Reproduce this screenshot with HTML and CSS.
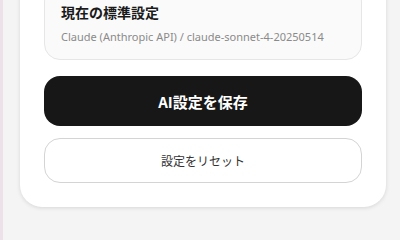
FILE: index.html
```html
<!DOCTYPE html>
<html>
<head>
    <title>AI設定</title>
    <link rel="stylesheet" href="styles.css">
</head>
<body>
    <div class="page">
        <div class="settings-card">
            <div class="current-box">
                <h3 class="current-title">現在の標準設定</h3>
                <p class="current-model">Claude (Anthropic API) / claude-sonnet-4-20250514</p>
            </div>
            <button class="btn btn-save">AI設定を保存</button>
            <button class="btn btn-reset">設定をリセット</button>
        </div>
    </div>
</body>
</html>
```

FILE: styles.css
```css
body {
    margin: 0;
    height: 240px;
    overflow: hidden;
    background-color: #f4f4f4;
    border-left: 3px solid #ece0e9;
    font-family: "Noto Sans", "Noto Sans CJK JP", sans-serif;
}
.page {
    padding: 0 14px 0 17px;
}
.settings-card {
    margin-top: -39px;
    background-color: #fff;
    border-radius: 22px;
    box-shadow: 0 1px 4px rgba(0, 0, 0, 0.12);
    padding: 24px;
    display: flex;
    flex-direction: column;
}
.current-box {
    background-color: #fafafa;
    border: 1px solid #e6e6e6;
    border-radius: 16px;
    padding: 17px 16px 14px;
    margin-bottom: 16px;
}
.current-title {
    margin: 0 0 6px;
    font-size: 14px;
    font-weight: 700;
    line-height: 20px;
    color: #1a1a1a;
}
.current-model {
    margin: 0;
    font-size: 11px;
    line-height: 16px;
    color: #8a8a8a;
}
.btn {
    font-family: "Noto Sans CJK JP", sans-serif;
    border-radius: 16px;
    cursor: pointer;
}
.btn-save {
    height: 50px;
    border: none;
    background-color: #171717;
    color: #fff;
    font-size: 15px;
    font-weight: 700;
    margin-bottom: 12px;
}
.btn-reset {
    height: 45px;
    border: 1px solid #d4d4d4;
    background-color: #fff;
    color: #333;
    font-size: 12px;
}
```
